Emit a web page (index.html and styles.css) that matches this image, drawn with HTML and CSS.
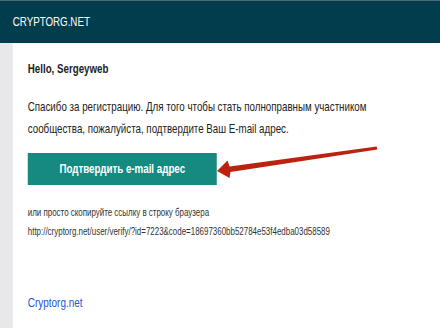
FILE: index.html
```html
<!DOCTYPE html>
<html lang="ru">
<head>
<meta charset="utf-8">
<title>Cryptorg.net</title>
<link rel="stylesheet" href="styles.css">
</head>
<body>
<div class="frame">
  <div class="page">
    <header class="topbar">CRYPTORG.NET</header>
    <div class="main">
      <div class="strip"></div>
      <div class="content">
        <p class="hello">Hello, Sergeyweb</p>
        <p class="text">Спасибо за регистрацию. Для того чтобы стать полноправным участником сообщества, пожалуйста, подтвердите Ваш E-mail адрес.</p>
        <a class="btn" href="#">Подтвердить e-mail адрес</a>
        <p class="small">или просто скопируйте ссылку в строку браузера</p>
        <p class="small url">http://cryptorg.net/user/verify/?id=7223&amp;code=18697360bb52784e53f4edba03d58589</p>
        <a class="site" href="#">Cryptorg.net</a>
      </div>
    </div>
  </div>
</div>
<svg class="arrow" width="440" height="328" viewBox="0 0 440 328">
  <polygon points="217,171 229.5,178 230.5,172 377.3,149.6 376.7,146.4 229.6,166.5 227.5,160.5" fill="#bd2210"/>
</svg>
</body>
</html>
```
FILE: styles.css
```css
html, body {
  margin: 0;
  padding: 0;
  background: #ffffff;
  overflow: hidden;
}
body {
  width: 440px;
  height: 328px;
  position: relative;
  font-family: "Liberation Sans", Arial, sans-serif;
}
.frame {
  width: 440px;
  height: 328px;
  overflow: hidden;
}
.page {
  width: 587px;
  height: 328px;
  transform: scaleX(0.75);
  transform-origin: 0 0;
  display: flex;
  flex-direction: column;
}
.topbar {
  height: 42px;
  border-top: 1px solid #4e6b74;
  background: #023d4e;
  color: #ffffff;
  font-size: 13px;
  line-height: 42px;
  padding-left: 17px;
  flex: none;
}
.main {
  flex: 1;
  display: flex;
}
.strip {
  width: 17px;
  background: #e8e8ec;
  flex: none;
}
.content {
  flex: 1;
  padding: 18px 0 0 20px;
  display: flex;
  flex-direction: column;
  align-items: flex-start;
  color: #222222;
}
.hello {
  margin: 0;
  font-size: 13px;
  font-weight: bold;
  line-height: 16px;
}
.text {
  margin: 19px 0 0 0;
  font-size: 13px;
  line-height: 22px;
  width: 520px;
}
.btn {
  margin-top: 13px;
  width: 252px;
  height: 32px;
  background: #168a80;
  color: #ffffff;
  font-size: 13px;
  font-weight: bold;
  line-height: 32px;
  text-align: center;
  text-decoration: none;
}
.small {
  margin: 20px 0 0 0;
  font-size: 10.6px;
  line-height: 14px;
  color: #333333;
}
.url {
  margin-top: 5px;
}
.site {
  margin-top: 57px;
  font-size: 13.3px;
  line-height: 16px;
  color: #2458cf;
  text-decoration: none;
}
.arrow {
  position: absolute;
  left: 0;
  top: 0;
  pointer-events: none;
}
```
